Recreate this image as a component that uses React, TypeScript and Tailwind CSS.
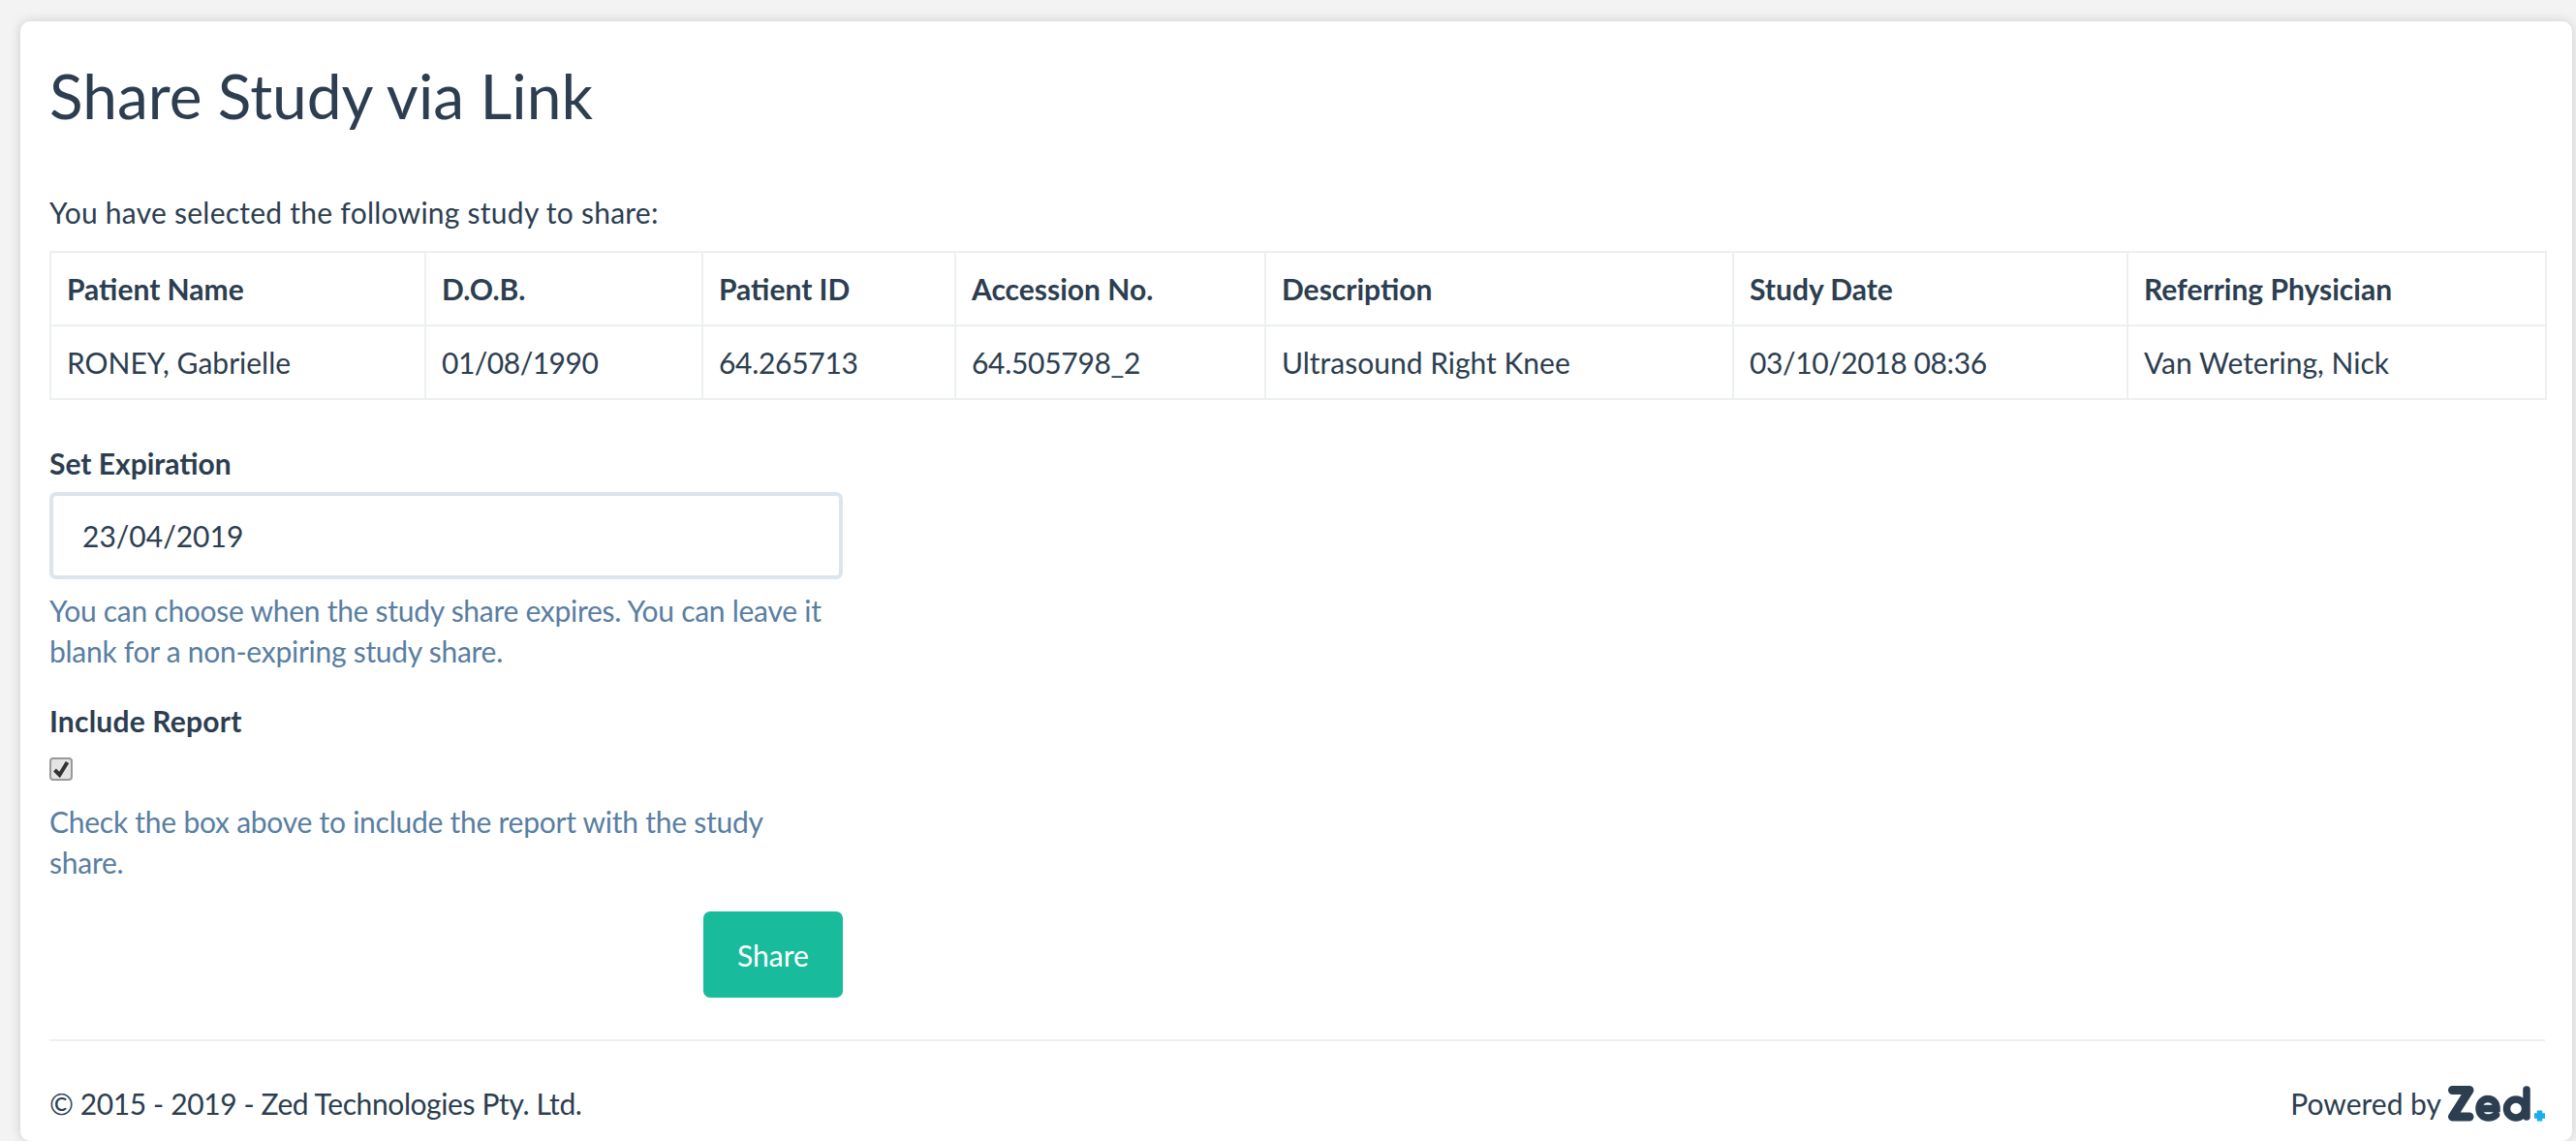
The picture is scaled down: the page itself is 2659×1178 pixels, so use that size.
import React from "react";

const columns = [
  { label: "Patient Name", value: "RONEY, Gabrielle", width: "w-[387px]", tracking: "" },
  { label: "D.O.B.", value: "01/08/1990", width: "w-[286px]", tracking: "tracking-[-0.5px]" },
  { label: "Patient ID", value: "64.265713", width: "w-[261px]", tracking: "tracking-[-0.3px]" },
  { label: "Accession No.", value: "64.505798_2", width: "w-[320px]", tracking: "tracking-[-0.3px]" },
  { label: "Description", value: "Ultrasound Right Knee", width: "w-[483px]", tracking: "" },
  { label: "Study Date", value: "03/10/2018 08:36", width: "w-[407px]", tracking: "tracking-[-0.4px]" },
  { label: "Referring Physician", value: "Van Wetering, Nick", width: "w-[432px]", tracking: "" },
];

function ZedLogo() {
  return (
    <svg width="100" height="37" viewBox="0 0 100 37" className="block">
      <path d="M4.500 4.500 H22 L4.500 32 H22" fill="none" stroke="#2c3e50" strokeWidth="9" strokeLinecap="round" strokeLinejoin="round" />
      <path d="M33 23.500 H50 C50 17 46 13.500 41 13.500 C35.500 13.500 32 18 32 23.500 C32 29 36 33 41.500 33 C45 33 47.500 32 49.500 30" fill="none" stroke="#2c3e50" strokeWidth="7.500" strokeLinecap="round" />
      <circle cx="70" cy="23.500" r="9.500" fill="none" stroke="#2c3e50" strokeWidth="7.500" />
      <path d="M81 4 V32" fill="none" stroke="#2c3e50" strokeWidth="7.500" strokeLinecap="round" />
      <path d="M94.500 25.500 V36.500 M89 31 H100" fill="none" stroke="#18aeec" strokeWidth="5.500" />
    </svg>
  );
}

export default function App() {
  return (
    <div className="h-[1178px] overflow-hidden bg-[#f3f3f3] pt-[22px] pl-[21px] pr-[4px] font-['Lato','Noto_Sans',sans-serif] text-[#2c3e50]">
      <div className="h-[1156px] rounded-[10px] bg-white pl-[30px] pr-[28px] shadow-[0_0_12px_rgba(0,0,0,0.16)]">
        <h1 className="pt-[41px] text-[64px] leading-[72px] font-normal">Share Study via Link</h1>
        <p className="mt-[64px] text-[30px] leading-[40px] tracking-[0.25px]">You have selected the following study to share:</p>

        <table className="mt-[20px] w-full table-fixed border-collapse text-[30px] leading-[40px]">
          <thead>
            <tr>
              {columns.map((c) => (
                <th key={c.label} className={`${c.width} border-2 border-[#ecf0f1] px-[16px] py-[17px] text-left font-bold`}>
                  {c.label}
                </th>
              ))}
            </tr>
          </thead>
          <tbody>
            <tr>
              {columns.map((c) => (
                <td key={c.label} className={`${c.tracking} border-2 border-[#ecf0f1] px-[16px] py-[17px]`}>
                  {c.value}
                </td>
              ))}
            </tr>
          </tbody>
        </table>

        <div className="mt-[44px] w-[819px] text-[30px] leading-[42px]">
          <label className="block font-bold">Set Expiration</label>
          <input
            readOnly
            value="23/04/2019"
            className="mt-[9px] block h-[90px] w-full rounded-[7px] border-[4px] border-[#dce4ec] bg-white px-[30px] text-[30px] text-[#2c3e50] outline-none"
          />
          <p className="mt-[11px] tracking-[-0.27px] text-[#597ea2]">
            You can choose when the study share expires. You can leave it blank for a non-expiring study share.
          </p>

          <label className="mt-[30px] block font-bold tracking-[0.2px]">Include Report</label>
          <div className="mt-[17px] flex h-[24px] w-[24px] items-center justify-center rounded-[4px] border-2 border-[#9a9a9a] bg-[#e4e4e4]">
            <svg width="18" height="18" viewBox="0 0 18 18">
              <path d="M2.500 10 L7.500 15 L15.500 2" fill="none" stroke="#333333" strokeWidth="4" />
            </svg>
          </div>
          <p className="mt-[21px] tracking-[-0.25px] text-[#597ea2]">Check the box above to include the report with the study share.</p>

          <div className="mt-[30px] flex justify-end">
            <button className="h-[89px] w-[144px] rounded-[7px] bg-[#18bc9c] text-[30px] text-white">Share</button>
          </div>
        </div>

        <hr className="mt-[43px] border-t-2 border-[#ecf0f1]" />

        <div className="mt-[44px] flex items-center justify-between text-[30px] leading-[40px]">
          <span className="tracking-[-0.4px]">© 2015 - 2019 - Zed Technologies Pty. Ltd.</span>
          <span className="flex items-center gap-[7px]">
            Powered by
            <ZedLogo />
          </span>
        </div>
      </div>
    </div>
  );
}
